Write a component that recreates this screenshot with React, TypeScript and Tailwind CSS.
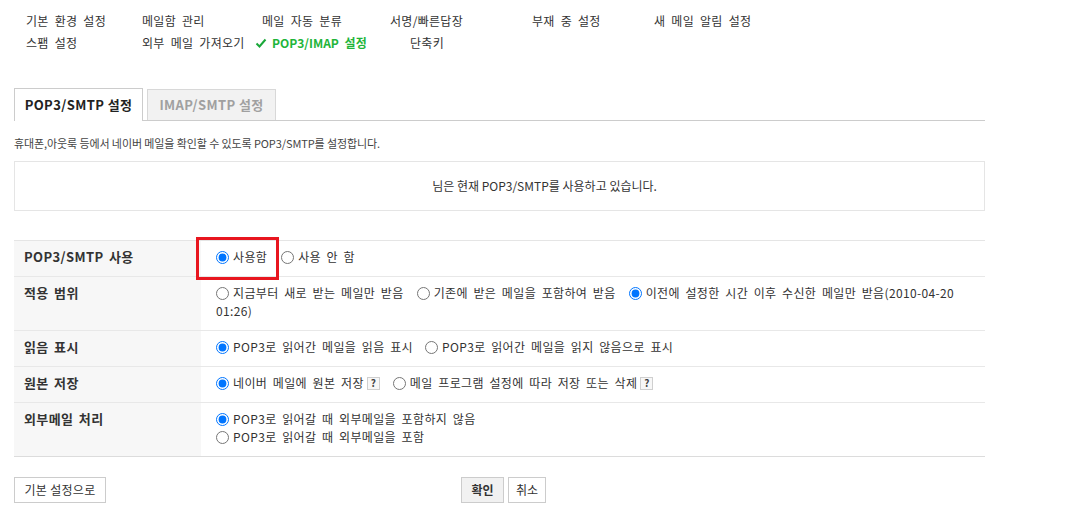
import React from "react";

const font = { fontFamily: '"Noto Sans CJK KR", "Noto Sans", sans-serif' };

function Check() {
  return (
    <svg width="12" height="12" viewBox="0 0 12 12" className="mr-[5px]">
      <path d="M1.5 6.5 L4.5 9.5 L10.5 2.5" stroke="#1aa83a" strokeWidth="2" fill="none" />
    </svg>
  );
}

function Q() {
  return (
    <span className="inline-flex items-center justify-center w-[13px] h-[13px] border border-[#cfcfcf] bg-[#f7f7f7] text-[10px] leading-none font-bold text-[#444] ml-[3px] tracking-normal">
      ?
    </span>
  );
}

function Radio({ name, checked, children, className = "" }: { name: string; checked?: boolean; children: React.ReactNode; className?: string }) {
  return (
    <label className={"flex items-center whitespace-nowrap h-[18px] " + className}>
      <input type="radio" name={name} defaultChecked={checked} className="m-0 w-[13px] h-[13px] mr-[4px] shrink-0" />
      <span>{children}</span>
    </label>
  );
}

function Line({ children }: { children: React.ReactNode }) {
  return <div className="flex items-center h-[18px] whitespace-nowrap">{children}</div>;
}

function Row({ label, children, last }: { label: string; children: React.ReactNode; last?: boolean }) {
  return (
    <div className={"grid grid-cols-[187px_1fr] border-b " + (last ? "border-[#dcdcdc]" : "border-[#e8e8e8]")}>
      <div className="bg-[#f7f7f7] pl-[10px] pt-[7px] pb-[10px] h-full leading-[18px] text-[13px] font-bold text-[#333] tracking-[0.4px] [word-spacing:2px] whitespace-nowrap">
        {label}
      </div>
      <div className="pl-[15px] pt-[7px] pb-[10px] text-[12px] leading-[18px] text-[#333] tracking-[0.35px] [word-spacing:2.6px]">{children}</div>
    </div>
  );
}

export default function App() {
  return (
    <div className="bg-white w-[1076px] h-[518px] text-[#333]" style={font}>
      <div className="w-[971px] ml-[14px]">
        {/* top nav */}
        <div className="pt-[10px] text-[12px] text-[#333] tracking-[0.3px] [word-spacing:3px]">
          <div className="flex h-[22px] leading-[22px] pl-[12px] whitespace-nowrap">
            <span className="w-[116px]">기본 환경 설정</span>
            <span className="w-[120px]">메일함 관리</span>
            <span className="w-[128px]">메일 자동 분류</span>
            <span className="w-[142px]">서명/빠른답장</span>
            <span className="w-[122px]">부재 중 설정</span>
            <span>새 메일 알림 설정</span>
          </div>
          <div className="flex h-[22px] leading-[22px] pl-[12px] whitespace-nowrap">
            <span className="w-[116px]">스팸 설정</span>
            <span className="w-[113px]">외부 메일 가져오기</span>
            <span className="w-[155px] flex items-center font-bold text-[#1fb53a] tracking-normal">
              <Check />
              POP3/IMAP 설정
            </span>
            <span>단축키</span>
          </div>
        </div>

        {/* tabs */}
        <div className="mt-[34px] flex items-end h-[33px] border-b border-[#cccccc]">
          <div className="w-[129px] h-[33px] -mb-px bg-white border border-b-0 border-[#cccccc] flex items-center justify-center text-[13px] font-bold text-[#222] tracking-[0.4px]">
            POP3/SMTP 설정
          </div>
          <div className="ml-[4px] w-[129px] h-[31px] bg-[#f2f2f2] border border-b-0 border-[#d8d8d8] flex items-center justify-center text-[13px] font-bold text-[#a0a0a0] tracking-[0.4px]">
            IMAP/SMTP 설정
          </div>
        </div>

        {/* description */}
        <div className="mt-[13px] h-[18px] leading-[18px] text-[11px] tracking-[-0.1px] text-[#444] whitespace-nowrap">
          휴대폰,아웃룩 등에서 네이버 메일을 확인할 수 있도록 POP3/SMTP를 설정합니다.
        </div>

        {/* notice box */}
        <div className="mt-[9px] h-[50px] border border-[#e5e5e5] flex items-center justify-center pl-[90px] text-[12px] text-[#333]">
          님은 현재 POP3/SMTP를 사용하고 있습니다.
        </div>

        {/* table */}
        <div className="relative mt-[29px] border-t border-[#e5e5e5]">
          <Row label="POP3/SMTP 사용">
            <Line>
              <Radio name="use" checked className="mr-[14px]">사용함</Radio>
              <Radio name="use">사용 안 함</Radio>
            </Line>
          </Row>
          <Row label="적용 범위">
            <Line>
              <Radio name="range" className="mr-[13px]">지금부터 새로 받는 메일만 받음</Radio>
              <Radio name="range" className="mr-[13px]">기존에 받은 메일을 포함하여 받음</Radio>
              <Radio name="range" checked>이전에 설정한 시간 이후 수신한 메일만 받음(2010-04-20</Radio>
            </Line>
            <Line>01:26)</Line>
          </Row>
          <Row label="읽음 표시">
            <Line>
              <Radio name="read" checked className="mr-[12px]">POP3로 읽어간 메일을 읽음 표시</Radio>
              <Radio name="read">POP3로 읽어간 메일을 읽지 않음으로 표시</Radio>
            </Line>
          </Row>
          <Row label="원본 저장">
            <Line>
              <label className="flex items-center whitespace-nowrap mr-[13px]">
                <input type="radio" name="orig" defaultChecked className="m-0 w-[13px] h-[13px] mr-[4px]" />
                <span>네이버 메일에 원본 저장</span>
                <Q />
              </label>
              <label className="flex items-center whitespace-nowrap">
                <input type="radio" name="orig" className="m-0 w-[13px] h-[13px] mr-[4px]" />
                <span>메일 프로그램 설정에 따라 저장 또는 삭제</span>
                <Q />
              </label>
            </Line>
          </Row>
          <Row label="외부메일 처리" last>
            <Line>
              <Radio name="ext" checked>POP3로 읽어갈 때 외부메일을 포함하지 않음</Radio>
            </Line>
            <Line>
              <Radio name="ext">POP3로 읽어갈 때 외부메일을 포함</Radio>
            </Line>
          </Row>
          <div className="absolute left-[182px] top-[-4px] w-[83px] h-[43px] border-[3px] border-[#e8161f] pointer-events-none" />
        </div>

        {/* buttons */}
        <div className="mt-[20px] flex items-center">
          <button className="h-[26px] w-[92px] border border-[#cccccc] bg-white text-[12px] text-[#333] tracking-[0.3px]">기본 설정으로</button>
          <div className="ml-[355px] flex gap-[4px]">
            <button className="h-[26px] w-[43px] border border-[#cccccc] bg-[#f1f1f1] text-[12px] font-bold text-[#333]">확인</button>
            <button className="h-[26px] w-[38px] border border-[#cccccc] bg-white text-[12px] text-[#333]">취소</button>
          </div>
        </div>
      </div>
    </div>
  );
}
